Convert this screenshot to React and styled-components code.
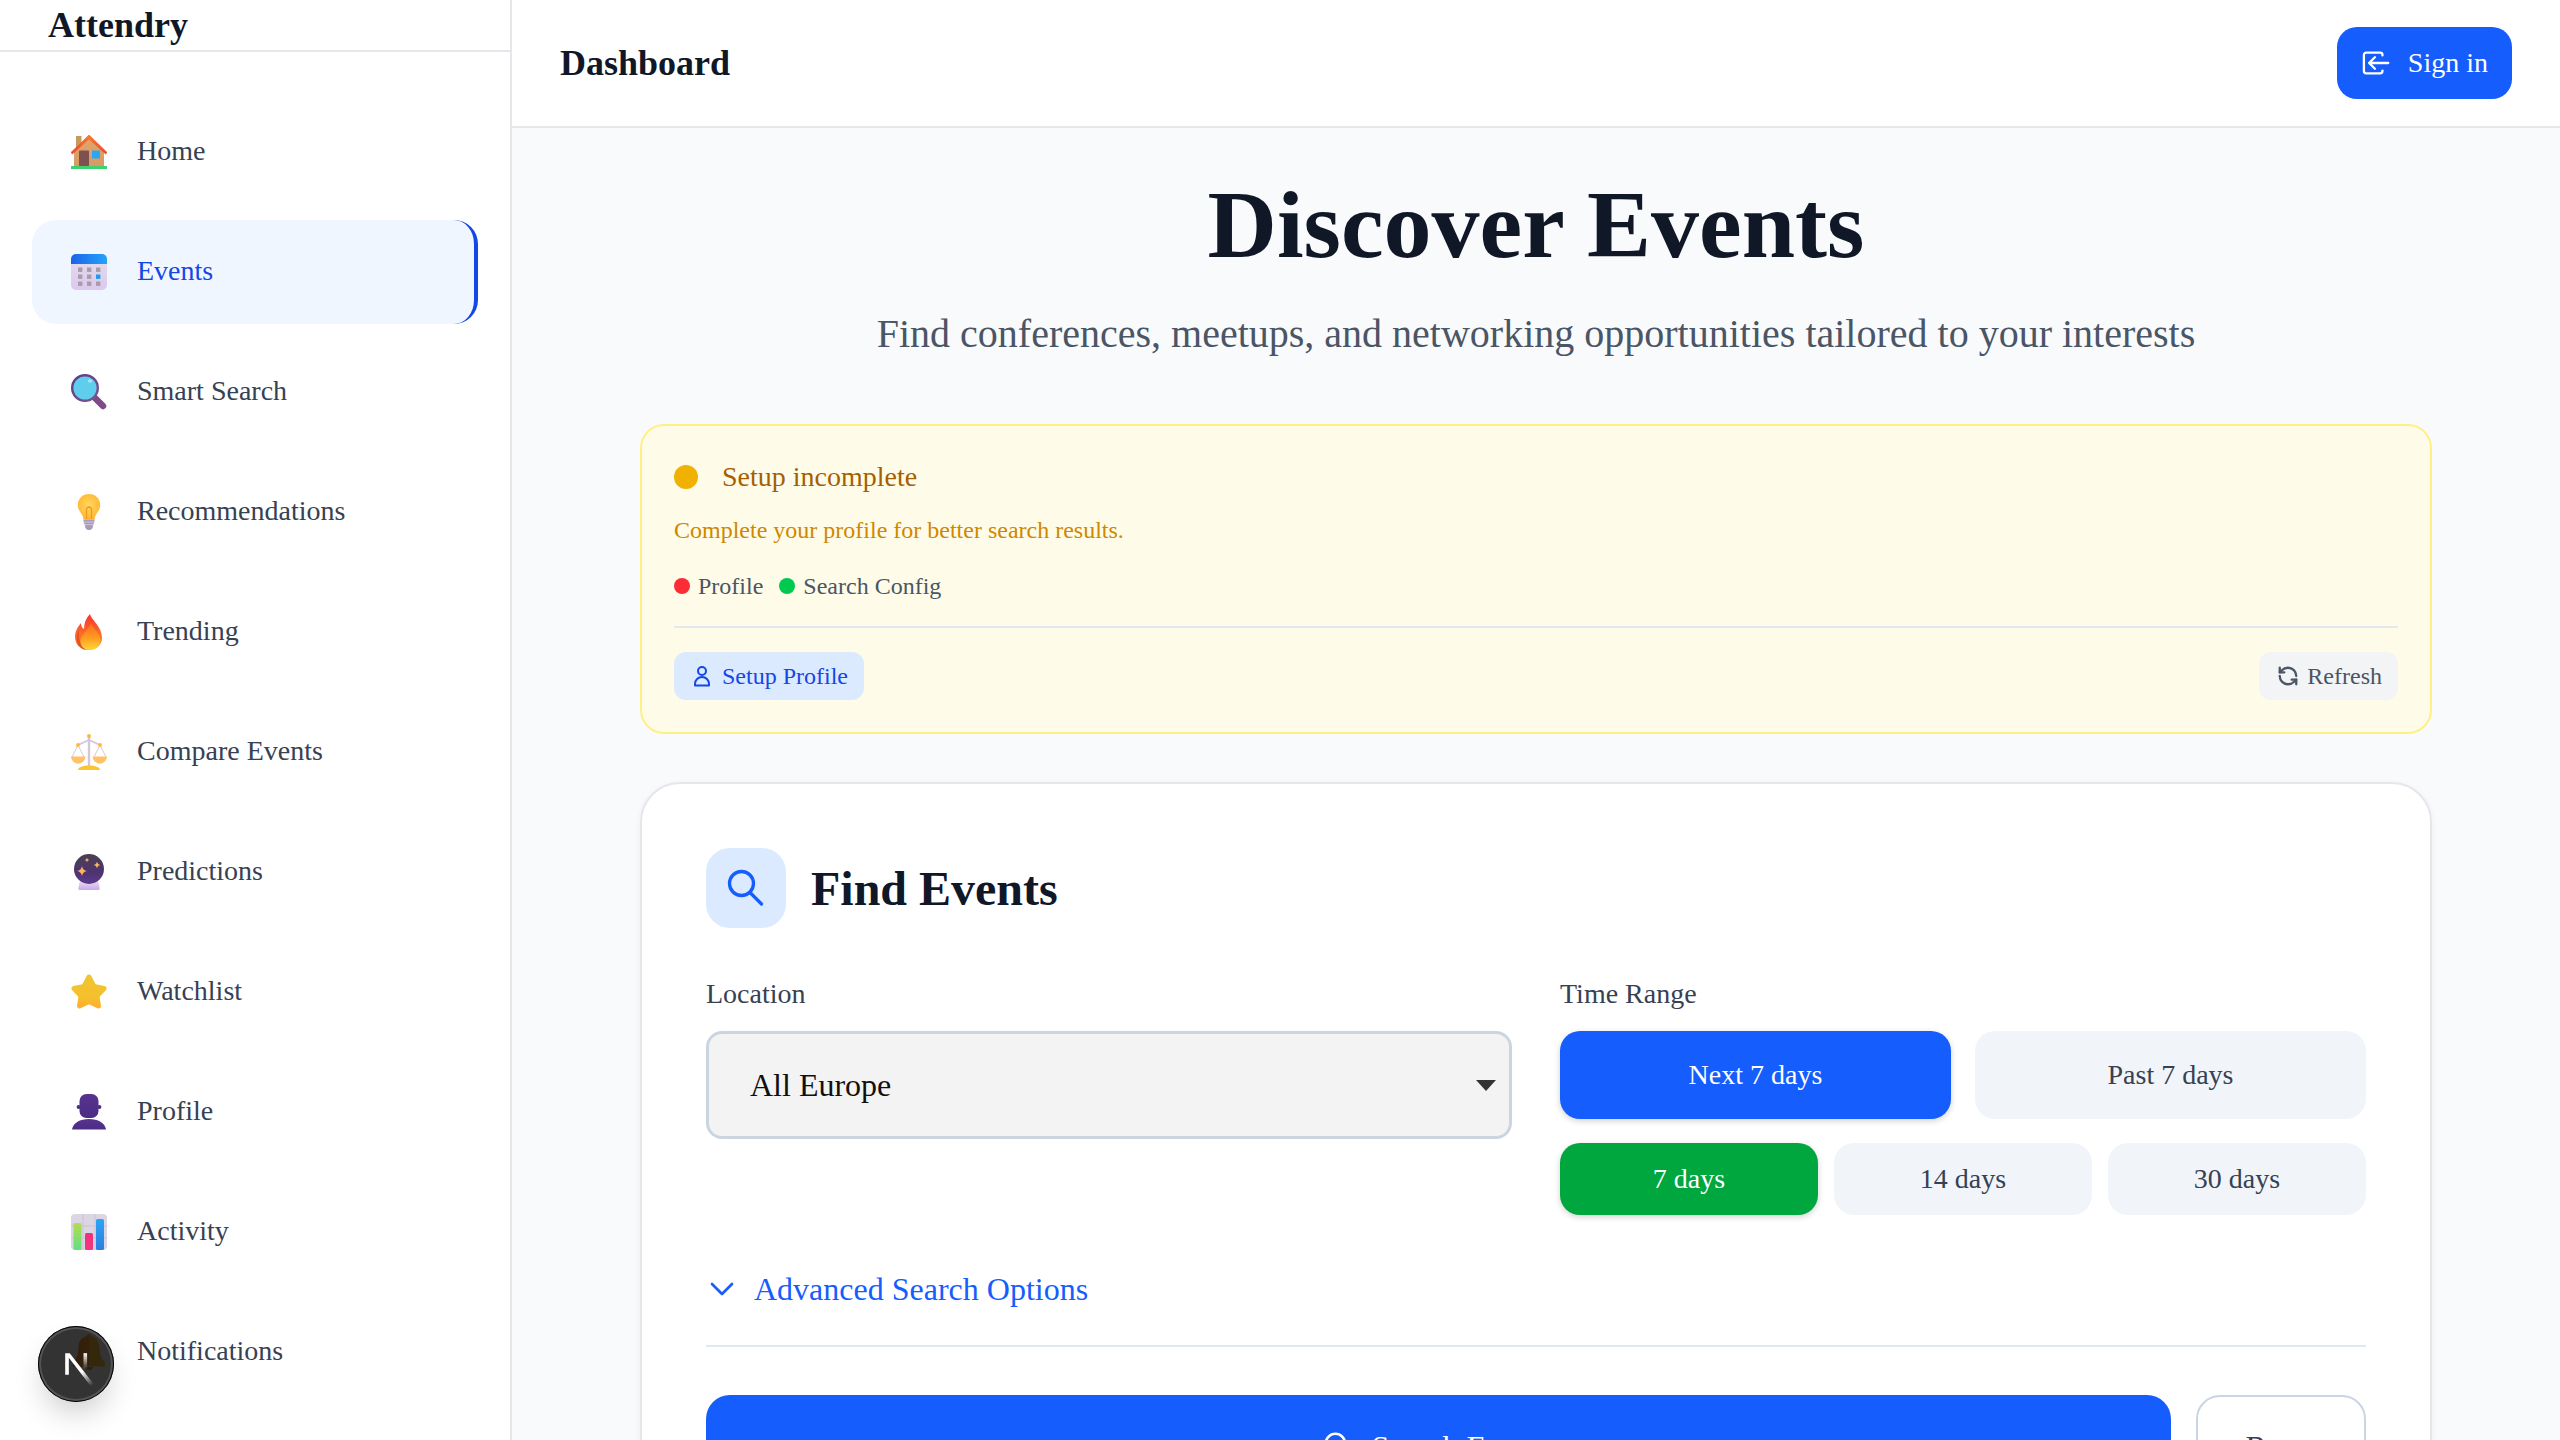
import React from "react";
import styled, { createGlobalStyle } from "styled-components";
import { RefreshCcw } from "lucide-react";

const Global = createGlobalStyle`
  html, body { margin: 0; padding: 0; height: 100%; overflow: hidden; }
  * { box-sizing: border-box; }
  body { font-family: "Liberation Serif", "Times New Roman", serif; background: #f9fafb; }
`;

const Shell = styled.div`
  position: relative;
  display: flex;
  width: 100%;
  height: 100vh;
  overflow: hidden;
`;
const Sidebar = styled.aside`
  flex: 0 0 512px;
  background: #fff;
  border-right: 2px solid #e5e7eb;
  overflow: hidden;
`;
const Brand = styled.div`
  height: 52px;
  padding: 0 48px;
  border-bottom: 2px solid #e5e7eb;
  font-size: 36px;
  line-height: 50px;
  font-weight: 700;
  color: #101828;
`;
const Nav = styled.nav`
  display: flex;
  flex-direction: column;
  gap: 16px;
  padding: 48px 32px;
`;
const NavItem = styled.a`
  flex: 0 0 104px;
  display: flex;
  align-items: center;
  gap: 30px;
  padding-left: 39px;
  border-radius: 24px;
  font-size: 28px;
  line-height: 40px;
  color: ${(p) => (p.$active ? "#1447e6" : "#364153")};
  background: ${(p) => (p.$active ? "#eff6ff" : "transparent")};
  border-right: ${(p) => (p.$active ? "4px solid #1447e6" : "none")};
`;
const NavLabel = styled.span`
  position: relative;
  top: -1px;
`;
const EmojiBox = styled.svg`
  flex: 0 0 36px;
  width: 36px;
  height: 36px;
  display: block;
`;

const DevBadge = styled.div`
  position: absolute;
  left: 38px;
  bottom: 38px;
  width: 76px;
  height: 76px;
  border-radius: 50%;
  background: rgba(0, 0, 0, 0.8);
  box-shadow: 0 0 0 1px #000 inset, 0 0 0 3px rgba(255, 255, 255, 0.16) inset, 0 16px 32px -8px rgba(0, 0, 0, 0.24);
  display: flex;
  align-items: center;
  justify-content: center;
  z-index: 5;
`;

const Column = styled.div`
  flex: 1;
  min-width: 0;
  display: flex;
  flex-direction: column;
`;
const TopBar = styled.header`
  flex: 0 0 128px;
  background: #fff;
  border-bottom: 2px solid #e5e7eb;
  display: flex;
  align-items: center;
  justify-content: space-between;
  padding: 0 48px;
`;
const PageName = styled.h2`
  margin: 0;
  font-size: 36px;
  font-weight: 700;
  color: #101828;
`;
const SignIn = styled.button`
  display: flex;
  align-items: center;
  gap: 18px;
  height: 72px;
  padding: 0 24px;
  border: none;
  border-radius: 20px;
  background: #155dfc;
  color: #fff;
  font: inherit;
  font-size: 28px;
`;
const Content = styled.main`
  flex: 1;
  overflow: hidden;
  display: flex;
  flex-direction: column;
  align-items: center;
  padding-top: 49px;
`;
const Hero = styled.h1`
  margin: 0 0 33px;
  font-size: 96px;
  line-height: 96px;
  font-weight: 700;
  color: #101828;
`;
const Sub = styled.p`
  margin: 0 0 62px;
  font-size: 40px;
  line-height: 56px;
  color: #4a5565;
`;
const Alert = styled.section`
  flex: none;
  width: 1792px;
  height: 310px;
  padding: 32px;
  background: #fefce8;
  border: 2px solid #fff085;
  border-radius: 24px;
  margin-bottom: 48px;
`;
const AlertHead = styled.div`
  display: flex;
  align-items: center;
  gap: 24px;
  font-size: 28px;
  line-height: 38px;
  color: #a65f00;
`;
const BigDot = styled.span`
  width: 24px;
  height: 24px;
  border-radius: 50%;
  background: #f0b100;
`;
const AlertText = styled.p`
  margin: 16px 0 20px;
  font-size: 24px;
  line-height: 36px;
  color: #d08700;
`;
const Legend = styled.div`
  display: flex;
  align-items: center;
  gap: 16px;
  font-size: 24px;
  line-height: 36px;
  color: #4a5565;
`;
const LegendItem = styled.span`
  display: flex;
  align-items: center;
  gap: 8px;
`;
const SmallDot = styled.span`
  width: 16px;
  height: 16px;
  border-radius: 50%;
  background: ${(p) => p.$color};
`;
const AlertFoot = styled.div`
  margin-top: 22px;
  padding-top: 24px;
  border-top: 2px solid #e2e8f0;
  display: flex;
  justify-content: space-between;
`;
const SmallBtn = styled.button`
  display: flex;
  align-items: center;
  gap: 8px;
  height: 48px;
  padding: 0 16px;
  border: none;
  border-radius: 12px;
  font: inherit;
  font-size: 24px;
  background: ${(p) => (p.$primary ? "#dbeafe" : "#f3f4f6")};
  color: ${(p) => (p.$primary ? "#1447e6" : "#4a5565")};
`;
const RefreshGlyph = styled(RefreshCcw)`
  width: 22px;
  height: 22px;
  margin-left: 2px;
  stroke-width: 2.5;
`;
const Card = styled.section`
  flex: none;
  width: 1792px;
  padding: 64px;
  background: #fff;
  border: 2px solid #e5e7eb;
  border-radius: 40px;
  box-shadow: 0 2px 6px rgba(0, 0, 0, 0.06);
`;
const CardHead = styled.div`
  display: flex;
  align-items: center;
  gap: 25px;
  margin-bottom: 46px;
`;
const IconTile = styled.div`
  width: 80px;
  height: 80px;
  border-radius: 24px;
  background: #dbeafe;
  color: #155dfc;
  display: flex;
  align-items: center;
  justify-content: center;
`;
const CardTitle = styled.h3`
  margin: 0;
  font-size: 48px;
  font-weight: 700;
  color: #101828;
`;
const FormGrid = styled.div`
  display: grid;
  grid-template-columns: 1fr 1fr;
  column-gap: 48px;
`;
const Label = styled.div`
  font-size: 28px;
  line-height: 40px;
  color: #364153;
  margin-bottom: 17px;
`;
const SelectBox = styled.div`
  height: 108px;
  padding: 0 13px 0 41px;
  display: flex;
  align-items: center;
  justify-content: space-between;
  background: #f3f3f3;
  border: 3px solid #cbd5e1;
  border-radius: 16px;
  font-size: 32px;
  color: #101010;
`;
const RangeRow = styled.div`
  display: grid;
  grid-template-columns: repeat(${(p) => p.$cols}, 1fr);
  column-gap: ${(p) => (p.$cols === 2 ? 24 : 16)}px;
  margin-bottom: 24px;
`;
const RangeBtn = styled.button`
  height: ${(p) => p.$h}px;
  border: none;
  border-radius: 20px;
  font: inherit;
  font-size: 28px;
  color: ${(p) => (p.$bg ? "#fff" : "#364153")};
  background: ${(p) => p.$bg || "#f1f5f9"};
  box-shadow: ${(p) => (p.$bg ? "0 2px 6px rgba(0,0,0,.18)" : "none")};
`;
const Advanced = styled.div`
  margin-top: 26px;
  padding-bottom: 32px;
  border-bottom: 2px solid #e2e8f0;
  display: flex;
  align-items: center;
  gap: 16px;
  height: 82px;
  font-size: 32px;
  line-height: 48px;
  color: #155dfc;
`;
const Actions = styled.div`
  display: flex;
  gap: 25px;
  margin-top: 48px;
`;
const SearchBtn = styled.button`
  flex: 1;
  height: 104px;
  border: none;
  border-radius: 24px;
  background: #155dfc;
  color: #fff;
  font: inherit;
  font-size: 32px;
  display: flex;
  align-items: center;
  justify-content: center;
  gap: 16px;
`;
const ResetBtn = styled.button`
  flex: 0 0 170px;
  height: 104px;
  border: 2px solid #cbd5e1;
  border-radius: 24px;
  background: #fff;
  color: #364153;
  font: inherit;
  font-size: 32px;
`;

const G = ({ id, x2 = 0, y2 = 1, x1 = 0, y1 = 0, stops }) => (
  <linearGradient id={id} x1={x1} y1={y1} x2={x2} y2={y2}>
    {stops.map(([o, c]) => (
      <stop key={o} offset={o} stopColor={c} />
    ))}
  </linearGradient>
);

const HomeIcon = () => (
  <EmojiBox viewBox="0 0 36 36">
    <defs>
      <G id="hb" stops={[[0, "#e0a56e"], [1, "#d99a64"]]} />
      <G id="hr" x2={1} y2={0} stops={[[0, "#e8452c"], [0.5, "#f9772b"], [1, "#e8452c"]]} />
    </defs>
    <rect x="5" y="2" width="5.5" height="14" fill="#c99a5e" />
    <path d="M3 17 18 3 33 17V32H3Z" fill="url(#hb)" />
    <path d="M0 18.5 18 1l18 17.5-1.4 1.4L18 5 1.4 19.9Z" fill="url(#hr)" stroke="url(#hr)" strokeWidth=".8" strokeLinejoin="round" />
    <rect x="8" y="16.5" width="10" height="15.5" rx=".8" fill="#7d5150" />
    <rect x="21" y="16.5" width="8" height="8" rx=".6" fill="#27a7f5" />
    <rect x="0" y="32" width="36" height="3" rx=".6" fill="#3fd06f" />
  </EmojiBox>
);
const CalendarIcon = () => (
  <EmojiBox viewBox="0 0 36 36">
    <defs>
      <G id="cb" stops={[[0, "#e3dfea"], [1, "#dcc9ee"]]} />
      <G id="ct" x2={1} y2={0} stops={[[0, "#1d63e6"], [1, "#23a3fb"]]} />
    </defs>
    <rect width="36" height="36" rx="5" fill="url(#cb)" />
    <path d="M0 10V5a5 5 0 0 1 5-5h26a5 5 0 0 1 5 5v5Z" fill="url(#ct)" />
    {[7, 16, 25].flatMap((x) =>
      [13.5, 20.5, 27.5].map((y) => (
        <rect key={`${x}${y}`} x={x} y={y} width="4.4" height="4.4" fill={x === 25 && y === 20.5 ? "#1c9bf5" : "#a79bac"} />
      ))
    )}
  </EmojiBox>
);
const SearchEmoji = () => (
  <EmojiBox viewBox="0 0 36 36">
    <defs>
      <G id="sg" x2={1} stops={[[0, "#5a3d86"], [1, "#7a5590"]]} />
    </defs>
    <path d="M24 24 32 32" stroke="#7f4a8a" strokeWidth="6.5" strokeLinecap="round" />
    <circle cx="14" cy="14" r="12.8" fill="#5fcdec" stroke="url(#sg)" strokeWidth="2.4" />
    <ellipse cx="19" cy="7" rx="2.2" ry="1.8" fill="#a8e6f6" />
  </EmojiBox>
);
const BulbIcon = () => (
  <EmojiBox viewBox="0 0 36 36">
    <defs>
      <radialGradient id="bb" cx=".5" cy=".45" r=".6">
        <stop offset="0" stopColor="#ffd75e" />
        <stop offset="1" stopColor="#ffb52f" />
      </radialGradient>
    </defs>
    <path d="M18 0C11.5 0 6.8 4.9 6.8 11c0 5 3.2 7.4 4.8 11 .6 1.4.8 2.4.8 3.5h11.2c0-1.1.2-2.1.8-3.5 1.6-3.6 4.8-6 4.8-11C29.2 4.9 24.5 0 18 0Z" fill="url(#bb)" />
    <path d="M15.5 25V15.5a2.5 2.5 0 1 1 5 0V25" fill="none" stroke="#f0971d" strokeWidth="1.3" />
    <path d="M12.5 25.5h11v2.4l-.8 1v1.4l-.8 1v1.7a4 4 0 0 1-7.8 0v-1.7l-.8-1v-1.4l-.8-1Z" fill="#a99bb8" />
    <path d="M13 28h10M13 30.6h10" stroke="#d8cfe0" strokeWidth=".8" />
  </EmojiBox>
);
const FireIcon = () => (
  <EmojiBox viewBox="0 0 36 36">
    <defs>
      <G id="fo" stops={[[0, "#f8312f"], [0.55, "#fb6c26"], [1, "#ff8f1f"]]} />
      <G id="fi" stops={[[0, "#fa6a22"], [0.55, "#ff9b1f"], [1, "#ffd83a"]]} />
    </defs>
    <path d="M19 0C20 6 31 12 31 24 31 31 25 36 18 36 10 36 4 31 4 23 4 17 7 13 10 9 10 12 11 14 13 15 13 9 15 4 19 0Z" fill="url(#fo)" />
    <path d="M8 20C8 26 10 32 15 36 9 35 5.5 30 5.5 24 5.5 21 6.5 18 8 16Z" fill="#e8502a" />
    <path d="M20 9C22 15 29.5 19 29.5 26 29.5 32 24.5 36 19 36 13 36 9.5 32 9.5 27 9.5 20 17.5 17 20 9Z" fill="url(#fi)" />
  </EmojiBox>
);
const ScaleIcon = () => (
  <EmojiBox viewBox="0 0 36 36">
    <rect x="16.8" y="3" width="2.4" height="29" fill="#d4c6dc" />
    <path d="M7 11 18 6l11 5" fill="none" stroke="#d4c6dc" strokeWidth="1.8" />
    <path d="M7 11 1 23M7 11l6 12M29 11l-6 12M29 11l6 12" fill="none" stroke="#cdbbcf" strokeWidth=".8" />
    <circle cx="18" cy="2" r="2" fill="#ffb83a" />
    <circle cx="7" cy="11" r="1.9" fill="#ffb83a" />
    <circle cx="29" cy="11" r="1.9" fill="#ffb83a" />
    <path d="M0 22.5h14.4a7.2 7.2 0 0 1-14.4 0Z" fill="#ffc266" />
    <path d="M21.6 22.5H36a7.2 7.2 0 0 1-14.4 0Z" fill="#ffc266" />
    <path d="M7 36c0-3 5-4.6 11-4.6S29 33 29 36Z" fill="#fcc62a" />
  </EmojiBox>
);
const Sparkle = ({ x, y, r }) => (
  <path d={`M${x} ${y - r}Q${x + r * 0.15} ${y - r * 0.15} ${x + r} ${y}Q${x + r * 0.15} ${y + r * 0.15} ${x} ${y + r}Q${x - r * 0.15} ${y + r * 0.15} ${x - r} ${y}Q${x - r * 0.15} ${y - r * 0.15} ${x} ${y - r}Z`} fill="#ffb35c" />
);
const BallIcon = () => (
  <EmojiBox viewBox="0 0 36 36">
    <defs>
      <G id="kb" stops={[[0, "#4a4152"], [0.6, "#4d3370"], [1, "#5c3a8c"]]} />
      <G id="kc" stops={[[0, "#e3d8ee"], [1, "#caa8ea"]]} />
    </defs>
    <path d="M8.5 28h19l1.2 6.5a1.5 1.5 0 0 1-1.5 1.5H8.8a1.5 1.5 0 0 1-1.5-1.5Z" fill="url(#kc)" />
    <circle cx="18" cy="15" r="15" fill="url(#kb)" />
    <Sparkle x={11} y={17} r={5} />
    <Sparkle x={16} y={6} r={2.2} />
    <Sparkle x={26} y={11} r={3.2} />
  </EmojiBox>
);
const StarIcon = () => (
  <EmojiBox viewBox="0 0 36 36">
    <defs>
      <G id="st" stops={[[0, "#f0c530"], [0.7, "#f5c02c"], [1, "#ffb02e"]]} />
    </defs>
    <path d="M18 3 23 12.5 33 14.5 26 22 27.5 32 18 27.5 8.5 32 10 22 3 14.5 13 12.5Z" fill="url(#st)" stroke="url(#st)" strokeWidth="5" strokeLinejoin="round" />
  </EmojiBox>
);
const PersonIcon = () => (
  <EmojiBox viewBox="0 0 36 36">
    <defs>
      <G id="pe" stops={[[0, "#57348f"], [1, "#4c2c84"]]} />
    </defs>
    <circle cx="7.6" cy="13" r="2" fill="#4c2c84" />
    <circle cx="28.4" cy="13" r="2" fill="#4c2c84" />
    <rect x="8.5" y="0" width="19" height="24" rx="7" fill="url(#pe)" />
    <path d="M1 35.5C2 29 9 25 18 25s16 4 17 10.500Z" fill="url(#pe)" />
  </EmojiBox>
);
const ChartIcon = () => (
  <EmojiBox viewBox="0 0 36 36">
    <defs>
      <G id="c1" stops={[[0, "#b4dc4d"], [1, "#5fe084"]]} />
      <G id="c2" stops={[[0, "#f0307a"], [1, "#f5347f"]]} />
      <G id="c3" stops={[[0, "#2aa5f5"], [1, "#2b7fdc"]]} />
    </defs>
    <rect width="36" height="36" rx="4" fill="#dcd6e4" />
    <path d="M12 0V36M24 0V36M0 12H36M0 24H36" stroke="#c9c2d2" strokeWidth="1" />
    <rect x="2.500" y="9" width="8" height="27" rx="1.500" fill="url(#c1)" />
    <rect x="14" y="19" width="8" height="17" rx="1.500" fill="url(#c2)" />
    <rect x="25" y="5" width="8" height="31" rx="1.500" fill="url(#c3)" />
  </EmojiBox>
);
const BellIcon = () => (
  <EmojiBox viewBox="0 0 36 36">
    <defs>
      <G id="be" x2={1} y2={0} stops={[[0, "#ff9a30"], [0.5, "#ffa032"], [0.52, "#ffc83d"], [1, "#ffc83d"]]} />
    </defs>
    <path d="M18 0C19.500 0 20.500 1 20.500 2.300 26 3.500 28.500 8 28.500 13.500 28.500 20 30.500 25 34 29V32.500H2V29C5.500 25 7.500 20 7.500 13.500 7.500 8 10 3.500 15.500 2.300 15.500 1 16.500 0 18 0Z" fill="url(#be)" />
    <path d="M14 33a4 3 0 0 0 8 0Z" fill="#f59a2e" />
  </EmojiBox>
);

const NextMark = () => (
  <svg width="54" height="54" viewBox="0 0 180 180" fill="none">
    <defs>
      <linearGradient id="nxa" gradientUnits="userSpaceOnUse" x1="109" y1="116.5" x2="144.5" y2="160.5">
        <stop stopColor="#fff" />
        <stop offset="1" stopColor="#fff" stopOpacity="0" />
      </linearGradient>
      <linearGradient id="nxb" gradientUnits="userSpaceOnUse" x1="121" y1="54" x2="120.8" y2="106.9">
        <stop stopColor="#fff" />
        <stop offset="1" stopColor="#fff" stopOpacity="0" />
      </linearGradient>
    </defs>
    <path d="M149.508 157.52L69.142 54H54V125.97H66.1136V69.3836L139.999 164.845C143.333 162.614 146.509 160.165 149.508 157.52Z" fill="url(#nxa)" />
    <rect x="115" y="54" width="12" height="72" fill="url(#nxb)" />
  </svg>
);

const SignInIcon = () => (
  <svg width="29" height="28" viewBox="0 0 25 24" fill="none" stroke="#fff" strokeWidth="2" strokeLinecap="round" strokeLinejoin="round">
    <path d="M18.500 5.500V5a2 2 0 0 0-2-2H4.500a2 2 0 0 0-2 2v14a2 2 0 0 0 2 2h12a2 2 0 0 0 2-2v-.5" />
    <path d="M23.500 12H7M12 7l-5 5 5 5" />
  </svg>
);
const UserIcon = () => (
  <svg width="24" height="24" viewBox="0 0 24 24" fill="none" stroke="currentColor" strokeWidth="2" strokeLinejoin="round">
    <circle cx="12" cy="7" r="4" />
    <path d="M5 21.500v-1.500a7 7 0 0 1 14 0v1.500Z" />
  </svg>
);
const Chevron = () => (
  <svg width="32" height="32" viewBox="0 0 24 24" fill="none" stroke="currentColor" strokeWidth="2" strokeLinecap="round" strokeLinejoin="round">
    <path d="M4.500 8.250 12 15.750l7.500-7.500" />
  </svg>
);
const Caret = () => (
  <svg width="20" height="11" viewBox="0 0 20 11">
    <path d="M0 0h20L10 11Z" fill="#333" />
  </svg>
);
const SearchGlyph = ({ size }) => (
  <svg width={size} height={size} viewBox="0 0 40 40" fill="none" stroke="currentColor" strokeWidth="3.300" strokeLinecap="round">
    <circle cx="15.500" cy="15.500" r="12" />
    <path d="M24 24.500 35.500 36" />
  </svg>
);

const items = [
  ["Home", HomeIcon],
  ["Events", CalendarIcon, true],
  ["Smart Search", SearchEmoji],
  ["Recommendations", BulbIcon],
  ["Trending", FireIcon],
  ["Compare Events", ScaleIcon],
  ["Predictions", BallIcon],
  ["Watchlist", StarIcon],
  ["Profile", PersonIcon],
  ["Activity", ChartIcon],
  ["Notifications", BellIcon],
];

export default function App() {
  return (
    <Shell>
      <Global />
      <Sidebar>
        <Brand>Attendry</Brand>
        <Nav>
          {items.map(([label, Icon, active]) => (
            <NavItem key={label} $active={active}>
              <Icon />
              <NavLabel>{label}</NavLabel>
            </NavItem>
          ))}
        </Nav>
      </Sidebar>
      <DevBadge>
        <NextMark />
      </DevBadge>
      <Column>
        <TopBar>
          <PageName>Dashboard</PageName>
          <SignIn>
            <SignInIcon />
            Sign in
          </SignIn>
        </TopBar>
        <Content>
          <Hero>Discover Events</Hero>
          <Sub>Find conferences, meetups, and networking opportunities tailored to your interests</Sub>
          <Alert>
            <AlertHead>
              <BigDot />
              Setup incomplete
            </AlertHead>
            <AlertText>Complete your profile for better search results.</AlertText>
            <Legend>
              <LegendItem>
                <SmallDot $color="#fb2c36" />
                Profile
              </LegendItem>
              <LegendItem>
                <SmallDot $color="#00c950" />
                Search Config
              </LegendItem>
            </Legend>
            <AlertFoot>
              <SmallBtn $primary>
                <UserIcon />
                Setup Profile
              </SmallBtn>
              <SmallBtn>
                <RefreshGlyph />
                Refresh
              </SmallBtn>
            </AlertFoot>
          </Alert>
          <Card>
            <CardHead>
              <IconTile>
                <SearchGlyph size={40} />
              </IconTile>
              <CardTitle>Find Events</CardTitle>
            </CardHead>
            <FormGrid>
              <div>
                <Label>Location</Label>
                <SelectBox>
                  All Europe
                  <Caret />
                </SelectBox>
              </div>
              <div>
                <Label>Time Range</Label>
                <RangeRow $cols={2}>
                  <RangeBtn $h={88} $bg="#155dfc">Next 7 days</RangeBtn>
                  <RangeBtn $h={88}>Past 7 days</RangeBtn>
                </RangeRow>
                <RangeRow $cols={3}>
                  <RangeBtn $h={72} $bg="#00a63e">7 days</RangeBtn>
                  <RangeBtn $h={72}>14 days</RangeBtn>
                  <RangeBtn $h={72}>30 days</RangeBtn>
                </RangeRow>
              </div>
            </FormGrid>
            <Advanced>
              <Chevron />
              Advanced Search Options
            </Advanced>
            <Actions>
              <SearchBtn>
                <SearchGlyph size={32} />
                Search Events
              </SearchBtn>
              <ResetBtn>Reset</ResetBtn>
            </Actions>
          </Card>
        </Content>
      </Column>
    </Shell>
  );
}
